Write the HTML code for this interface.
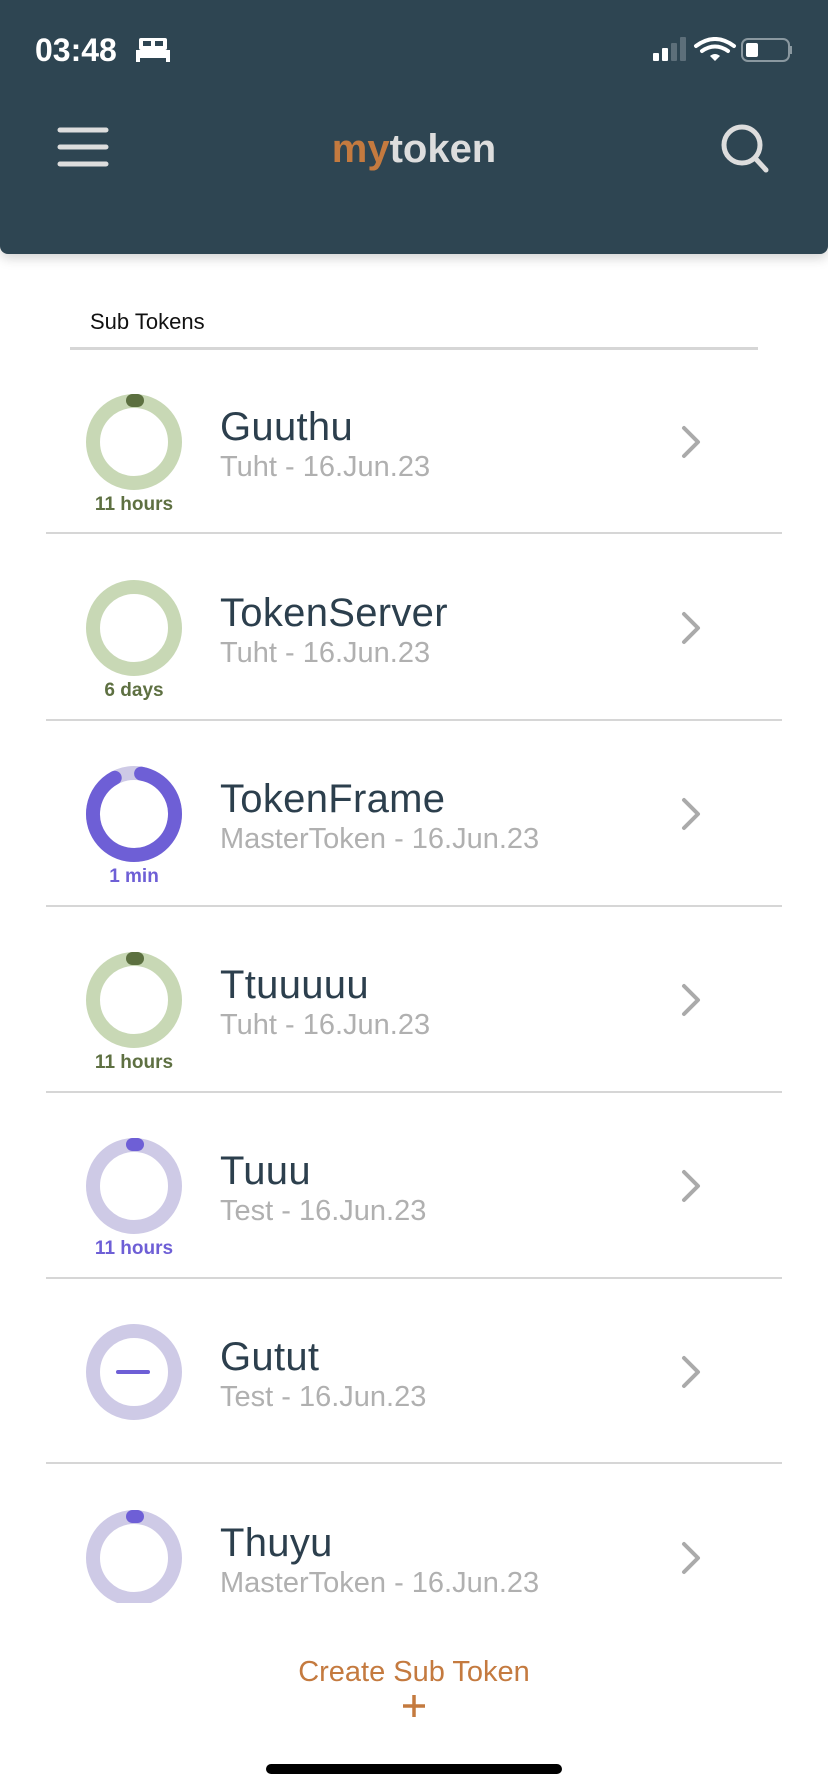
<!DOCTYPE html>
<html><head><meta charset="utf-8"><style>
body{margin:0;width:828px;height:1792px;background:#fff;position:relative;overflow:hidden;font-family:"Liberation Sans",sans-serif}
.hdr{position:absolute;left:0;top:0;width:828px;height:254px;background:#2e4552;border-radius:0 0 8px 8px;box-shadow:0 4px 12px rgba(0,0,0,.18)}
.abs{position:absolute}
.row{position:absolute;left:0;width:828px;height:186px}
.sep{position:absolute;left:46px;width:736px;height:2px;background:#d6d6d6}
.t{position:absolute;left:220px;font-size:40px;color:#2c3f4d;line-height:1;letter-spacing:0.3px}
.s{position:absolute;left:220px;font-size:29px;color:#b0b0b0;line-height:1}
.lbl{position:absolute;width:268px;left:0;text-align:center;font-size:19px;font-weight:bold;line-height:1}
</style></head><body>
<div class="hdr">
 <div class="abs" style="left:35px;top:32px;color:#fff;font-size:32px;font-weight:bold;">03:48</div>
 <svg class="abs" style="left:136px;top:38px" width="34" height="24" viewBox="0 0 34 24"><rect x="3" y="0" width="28" height="12" rx="2" fill="#fff"/><rect x="7" y="3" width="8" height="5" fill="#2e4552"/><rect x="19" y="3" width="8" height="5" fill="#2e4552"/><rect x="0" y="12" width="34" height="8" fill="#fff"/><rect x="0" y="19" width="4" height="5" fill="#fff"/><rect x="30" y="19" width="4" height="5" fill="#fff"/></svg>
 <svg class="abs" style="left:652px;top:37px" width="140" height="26" viewBox="0 0 140 26">
  <rect x="1" y="16" width="6" height="8" rx="1" fill="#fff"/><rect x="10" y="11" width="6" height="13" rx="1" fill="#fff"/><rect x="19" y="6" width="6" height="18" rx="1" fill="#5d6f7a"/><rect x="28" y="0" width="6" height="24" rx="1" fill="#5d6f7a"/>
  <path d="M44 9 Q63 -5 82 9" stroke="#fff" stroke-width="4" fill="none" stroke-linecap="round"/><path d="M50 14 Q63 5 76 14" stroke="#fff" stroke-width="4" fill="none" stroke-linecap="round"/><path d="M58 19 L63 24 L68 19 Q63 15 58 19Z" fill="#fff"/>
  <rect x="90" y="2" width="47" height="22" rx="6" stroke="#8a98a0" stroke-width="2" fill="none"/><rect x="94" y="6" width="12" height="14" rx="2" fill="#fff"/><rect x="138" y="9" width="2" height="8" fill="#8a98a0"/>
 </svg>
 <svg class="abs" style="left:57px;top:124px" width="52" height="46"><g stroke="#ddd" stroke-width="5" stroke-linecap="round"><line x1="3" y1="6" x2="49" y2="6"/><line x1="3" y1="23" x2="49" y2="23"/><line x1="3" y1="40" x2="49" y2="40"/></g></svg>
 <div class="abs" style="left:0;width:828px;top:127px;text-align:center;font-size:40px;font-weight:bold;color:#ddd"><span style="color:#c47a3f">my</span>token</div>
 <svg class="abs" style="left:716px;top:120px" width="56" height="56"><circle cx="26" cy="25" r="18" stroke="#ddd" stroke-width="5" fill="none"/><line x1="39" y1="38" x2="50" y2="50" stroke="#ddd" stroke-width="5" stroke-linecap="round"/></svg>
</div>
<div class="abs" style="left:90px;top:309px;font-size:22px;color:#111">Sub Tokens</div>
<div class="abs" style="left:70px;top:347px;width:688px;height:3px;background:#d6d6d6"></div>

<div class="row" style="top:349px">
 <svg class="abs" style="left:82px;top:41px" width="104" height="104"><circle cx="52" cy="52" r="41" stroke="#c8d8b5" stroke-width="14" fill="none"/><rect x="44" y="4" width="18" height="13" rx="6.5" fill="#5c7040"/></svg>
 <div class="lbl" style="top:146px;color:#5e7042">11 hours</div>
 <div class="t" style="top:58px">Guuthu</div><div class="s" style="top:104px">Tuht - 16.Jun.23</div>
</div>
<div class="sep" style="top:532px"></div>
<div class="row" style="top:535px">
 <svg class="abs" style="left:82px;top:41px" width="104" height="104"><circle cx="52" cy="52" r="41" stroke="#c8d8b5" stroke-width="14" fill="none"/></svg>
 <div class="lbl" style="top:146px;color:#5e7042">6 days</div>
 <div class="t" style="top:58px">TokenServer</div><div class="s" style="top:104px">Tuht - 16.Jun.23</div>
</div>
<div class="sep" style="top:719px"></div>
<div class="row" style="top:721px">
 <svg class="abs" style="left:82px;top:41px" width="104" height="104"><circle cx="52" cy="52" r="41" stroke="#cecae6" stroke-width="14" fill="none"/><circle cx="52" cy="52" r="41" stroke="#6e5fd6" stroke-width="14" fill="none" stroke-linecap="round" stroke-dasharray="230 300" transform="rotate(-80 52 52)"/></svg>
 <div class="lbl" style="top:146px;color:#6e5fd6">1 min</div>
 <div class="t" style="top:58px">TokenFrame</div><div class="s" style="top:104px">MasterToken - 16.Jun.23</div>
</div>
<div class="sep" style="top:905px"></div>
<div class="row" style="top:907px">
 <svg class="abs" style="left:82px;top:41px" width="104" height="104"><circle cx="52" cy="52" r="41" stroke="#c8d8b5" stroke-width="14" fill="none"/><rect x="44" y="4" width="18" height="13" rx="6.5" fill="#5c7040"/></svg>
 <div class="lbl" style="top:146px;color:#5e7042">11 hours</div>
 <div class="t" style="top:58px">Ttuuuuu</div><div class="s" style="top:104px">Tuht - 16.Jun.23</div>
</div>
<div class="sep" style="top:1091px"></div>
<div class="row" style="top:1093px">
 <svg class="abs" style="left:82px;top:41px" width="104" height="104"><circle cx="52" cy="52" r="41" stroke="#cecae6" stroke-width="14" fill="none"/><rect x="44" y="4" width="18" height="13" rx="6.5" fill="#6e5fd6"/></svg>
 <div class="lbl" style="top:146px;color:#6e5fd6">11 hours</div>
 <div class="t" style="top:58px">Tuuu</div><div class="s" style="top:104px">Test - 16.Jun.23</div>
</div>
<div class="sep" style="top:1277px"></div>
<div class="row" style="top:1279px">
 <svg class="abs" style="left:82px;top:41px" width="104" height="104"><circle cx="52" cy="52" r="41" stroke="#cecae6" stroke-width="14" fill="none"/><line x1="36" y1="52" x2="66" y2="52" stroke="#6e5fd6" stroke-width="4" stroke-linecap="round"/></svg>
 <div class="t" style="top:58px">Gutut</div><div class="s" style="top:104px">Test - 16.Jun.23</div>
</div>
<div class="sep" style="top:1462px"></div>
<div class="row" style="top:1465px;height:138px;overflow:hidden">
 <svg class="abs" style="left:82px;top:41px" width="104" height="104"><circle cx="52" cy="52" r="41" stroke="#cecae6" stroke-width="14" fill="none"/><rect x="44" y="4" width="18" height="13" rx="6.5" fill="#6e5fd6"/></svg>
 <div class="t" style="top:58px">Thuyu</div><div class="s" style="top:104px">MasterToken - 16.Jun.23</div>
</div>
<svg class="abs" style="left:0;top:0" width="828" height="1792"><g stroke="#aaa" stroke-width="4" fill="none" stroke-linecap="round" stroke-linejoin="round">
<path d="M684 428 L698 442 L684 456"/><path d="M684 614 L698 628 L684 642"/><path d="M684 800 L698 814 L684 828"/><path d="M684 986 L698 1000 L684 1014"/><path d="M684 1172 L698 1186 L684 1200"/><path d="M684 1358 L698 1372 L684 1386"/><path d="M684 1544 L698 1558 L684 1572"/></g></svg>
<div class="abs" style="left:0;width:828px;top:1656px;text-align:center;font-size:29px;color:#c47a3f">Create Sub Token</div>
<svg class="abs" style="left:402px;top:1694px" width="24" height="24"><g stroke="#c47a3f" stroke-width="3.5"><line x1="12" y1="1" x2="12" y2="23"/><line x1="1" y1="12" x2="23" y2="12"/></g></svg>
<div class="abs" style="left:266px;top:1764px;width:296px;height:10px;border-radius:5px;background:#000"></div>
</body></html>
